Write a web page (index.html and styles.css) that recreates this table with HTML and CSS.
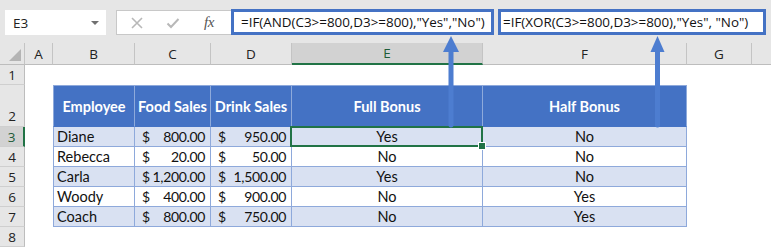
FILE: index.html
```html
<!DOCTYPE html>
<html lang="en">
<head>
<meta charset="utf-8">
<title>Bonus sheet</title>
<link rel="stylesheet" href="styles.css">
</head>
<body>
<div class="app">
  <div class="toolbar">
    <div class="namebox">
      <span class="cellref">E3</span>
      <span class="dropdown"></span>
    </div>
    <div class="fxbox">
      <svg class="btn" width="14" height="14" viewBox="0 0 14 14"><path d="M2 2 L12 12 M12 2 L2 12" stroke="#b8b8b8" stroke-width="1.6" fill="none"/></svg>
      <svg class="btn" width="14" height="14" viewBox="0 0 14 14"><path d="M1.5 7.5 L5 11 L12.5 3" stroke="#b8b8b8" stroke-width="2" fill="none"/></svg>
      <span class="fx">fx</span>
    </div>
    <div class="formula formula-and">=IF(AND(C3&gt;=800,D3&gt;=800),"Yes","No")</div>
    <div class="formula formula-xor">=IF(XOR(C3&gt;=800,D3&gt;=800),"Yes", "No")</div>
  </div>

  <div class="sheet">
    <!-- column headings -->
    <div class="hd corner"><span class="corner-tri"></span></div>
    <div class="hd col">A</div>
    <div class="hd col">B</div>
    <div class="hd col">C</div>
    <div class="hd col">D</div>
    <div class="hd col active-col">E</div>
    <div class="hd col">F</div>
    <div class="hd col">G</div>
    <div class="hd col last"></div>

    <!-- row 1 -->
    <div class="hd row">1</div>
    <div class="c"></div><div class="c"></div><div class="c"></div><div class="c"></div><div class="c"></div><div class="c"></div><div class="c"></div><div class="c"></div>

    <!-- row 2: table heading -->
    <div class="hd row bottom">2</div>
    <div class="c"></div>
    <div class="t th first">Employee</div>
    <div class="t th">Food Sales</div>
    <div class="t th">Drink Sales</div>
    <div class="t th">Full Bonus</div>
    <div class="t th">Half Bonus</div>
    <div class="c"></div><div class="c"></div>

    <!-- row 3 -->
    <div class="hd row active-row">3</div>
    <div class="c"></div>
    <div class="t band first name">Diane</div>
    <div class="t band money"><span>$</span><span>800.00</span></div>
    <div class="t band money"><span>$</span><span>950.00</span></div>
    <div class="t band mid selected">Yes</div>
    <div class="t band mid">No</div>
    <div class="c"></div><div class="c"></div>

    <!-- row 4 -->
    <div class="hd row">4</div>
    <div class="c"></div>
    <div class="t first name">Rebecca</div>
    <div class="t money"><span>$</span><span>20.00</span></div>
    <div class="t money"><span>$</span><span>50.00</span></div>
    <div class="t mid">No</div>
    <div class="t mid">No</div>
    <div class="c"></div><div class="c"></div>

    <!-- row 5 -->
    <div class="hd row">5</div>
    <div class="c"></div>
    <div class="t band first name">Carla</div>
    <div class="t band money"><span>$</span><span>1,200.00</span></div>
    <div class="t band money"><span>$</span><span>1,500.00</span></div>
    <div class="t band mid">Yes</div>
    <div class="t band mid">No</div>
    <div class="c"></div><div class="c"></div>

    <!-- row 6 -->
    <div class="hd row">6</div>
    <div class="c"></div>
    <div class="t first name">Woody</div>
    <div class="t money"><span>$</span><span>400.00</span></div>
    <div class="t money"><span>$</span><span>900.00</span></div>
    <div class="t mid">No</div>
    <div class="t mid">Yes</div>
    <div class="c"></div><div class="c"></div>

    <!-- row 7 -->
    <div class="hd row">7</div>
    <div class="c"></div>
    <div class="t band first name">Coach</div>
    <div class="t band money"><span>$</span><span>800.00</span></div>
    <div class="t band money"><span>$</span><span>750.00</span></div>
    <div class="t band mid">No</div>
    <div class="t band mid">Yes</div>
    <div class="c"></div><div class="c"></div>

    <!-- row 8 -->
    <div class="hd row">8</div>
    <div class="c"></div><div class="c"></div><div class="c"></div><div class="c"></div><div class="c"></div><div class="c"></div><div class="c"></div><div class="c"></div>
  </div>

  <!-- callout arrows from the formulas down to their result columns -->
  <svg class="arrows" width="771" height="247" viewBox="0 0 771 247">
    <g fill="#4d7dd0">
      <path d="M451 36 L459 52 L453.5 52 L453.5 126 Q451 129 448.5 126 L448.5 52 L443 52 Z"/>
      <path d="M657.5 36 L664.5 52 L660 52 L660 126 Q657.5 129 655 126 L655 52 L650.5 52 Z"/>
    </g>
  </svg>
</div>
</body>
</html>
```

FILE: styles.css
```css
* { box-sizing: border-box; }

html, body {
  margin: 0;
  padding: 0;
  background: #ffffff;
}

.app {
  position: relative;
  width: 771px;
  height: 247px;
  overflow: hidden;
  font-family: Lato, "Open Sans", sans-serif;
}

/* ---------- formula bar ---------- */
.toolbar {
  height: 43px;
  background: #e6e6e6;
  display: flex;
  align-items: flex-start;
  padding: 10px 0 0 5px;
}

.namebox {
  width: 101px;
  height: 25px;
  background: #fff;
  display: flex;
  align-items: center;
  justify-content: space-between;
  padding: 0 7px 0 8px;
  font-family: "Open Sans", "Noto Sans", sans-serif;
  font-size: 13.5px;
  color: #222;
}

.dropdown {
  width: 0;
  height: 0;
  border-left: 4px solid transparent;
  border-right: 4px solid transparent;
  border-top: 4px solid #707070;
}

.fxbox {
  margin-left: 10px;
  width: 115px;
  height: 25px;
  background: #fff;
  border: 1px solid #c8c8c8;
  border-right: none;
  display: flex;
  align-items: center;
  padding-left: 13px;
  gap: 22px;
}

.fx {
  font-family: "Liberation Serif", serif;
  font-style: italic;
  font-size: 15px;
  color: #555;
  margin-left: 2px;
  letter-spacing: -0.5px;
}

.formula {
  height: 26px;
  background: #fff;
  border: 3px solid #4472c4;
  font-family: "Open Sans", "Noto Sans", sans-serif;
  font-size: 13.4px;
  color: #111;
  display: flex;
  align-items: center;
  white-space: nowrap;
  margin-top: -1px;
}

.formula-and {
  width: 263px;
  padding-left: 7px;
}

.formula-xor {
  width: 268px;
  margin-left: 4px;
  padding-left: 2px;
}

/* ---------- grid ---------- */
.sheet {
  display: grid;
  grid-template-columns: 25px 28px 82px 76px 81px 191px 204px 65px 19px;
  grid-template-rows: 22px 20px 42px repeat(6, 20px);
}

.hd {
  background: #e6e6e6;
  font-family: "Open Sans", "Noto Sans", sans-serif;
  font-size: 13.5px;
  color: #222;
  display: flex;
  align-items: center;
  justify-content: center;
}

.col {
  border-right: 1px solid #c4c4c4;
  border-bottom: 1px solid #bdbdbd;
}

.col.last { border-right: none; }

.corner {
  position: relative;
  border-right: 1px solid #c4c4c4;
  border-bottom: 1px solid #bdbdbd;
}

.corner-tri {
  position: absolute;
  right: 3px;
  bottom: 3px;
  width: 0;
  height: 0;
  border-left: 12px solid transparent;
  border-bottom: 12px solid #b4b4b4;
}

.row {
  border-right: 1px solid #bdbdbd;
  border-bottom: 1px solid #cfcfcf;
}

.row.bottom { align-items: flex-end; padding-bottom: 1px; }

.active-col {
  background: #d2d2d2;
  border-bottom: 2px solid #217346;
  color: #1e5c38;
}

.active-row {
  background: #d2d2d2;
  border-right: 2px solid #217346;
  color: #1e5c38;
}

.c { background: #fff; }

/* ---------- table ---------- */
.t {
  font-size: 14.5px;
  color: #111;
  border-right: 1px solid #8ea9db;
  border-bottom: 1px solid #8ea9db;
  display: flex;
  align-items: center;
  white-space: nowrap;
}

.t.first { border-left: 1px solid #8ea9db; }

.th {
  background: #4472c4;
  color: #fff;
  font-weight: 700;
  justify-content: center;
  border-top: 1px solid #8ea9db;
  border-right-color: #8eaadb;
  border-bottom-color: #4472c4;
}

.band { background: #d9e1f2; }

.name { padding-left: 3px; }

.money {
  justify-content: space-between;
  padding: 0 5px 0 7px;
  font-size: 14px;
  letter-spacing: -0.35px;
}

.mid { justify-content: center; }

.selected { position: relative; }

.selected::after {
  content: "";
  position: absolute;
  left: -2px;
  top: -1px;
  right: -1px;
  bottom: -1px;
  border: 2px solid #217346;
}

.selected::before {
  content: "";
  position: absolute;
  right: -4px;
  bottom: -4px;
  width: 6px;
  height: 6px;
  background: #217346;
  border: 1px solid #fff;
  z-index: 1;
}

/* ---------- overlay arrows ---------- */
.arrows {
  position: absolute;
  left: 0;
  top: 0;
  pointer-events: none;
}
```
